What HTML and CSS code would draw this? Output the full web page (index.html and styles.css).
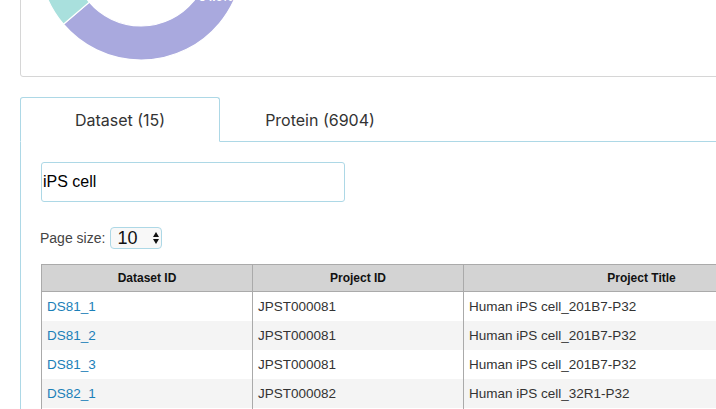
FILE: index.html
```html
<!DOCTYPE html>
<html>
<head>
<meta charset="utf-8">
<link rel="stylesheet" href="styles.css">
</head>
<body>
<div class="page">
  <div class="chart-card">
    <svg class="donut" width="240" height="136" viewBox="0 0 240 136">
      <path d="M 171 -71.3 A 102 102 0 1 1 42.44 83.24 L 68.29 61.16 A 68 68 0 1 0 154 -41.9 Z" fill="#a9a9de" stroke="#ffffff" stroke-width="1.2"/>
      <path d="M 42.44 83.24 A 102 102 0 0 1 69 -71.3 L 86 -41.9 A 68 68 0 0 0 68.29 61.16 Z" fill="#a9e0dd" stroke="#ffffff" stroke-width="1.2"/>
      <text x="178" y="59.5" class="donut-label">54.6%</text>
    </svg>
  </div>

  <div class="tabs">
    <ul class="tab-nav">
      <li class="tab active"><a>Dataset (15)</a></li>
      <li class="tab"><a>Protein (6904)</a></li>
    </ul>
    <div class="tab-pane">
      <input class="search" type="text" value="iPS cell">
      <div class="page-size">
        <span class="ps-label">Page size:</span>
        <span class="ps-select"><span class="ps-val">10</span><span class="ps-arrows"><span class="up"></span><span class="down"></span></span></span>
      </div>
      <table class="grid">
        <colgroup><col class="c1"><col class="c2"><col class="c3"></colgroup>
        <thead>
          <tr><th>Dataset ID</th><th>Project ID</th><th>Project Title</th></tr>
        </thead>
        <tbody>
          <tr><td><a>DS81_1</a></td><td>JPST000081</td><td>Human iPS cell_201B7-P32</td></tr>
          <tr><td><a>DS81_2</a></td><td>JPST000081</td><td>Human iPS cell_201B7-P32</td></tr>
          <tr><td><a>DS81_3</a></td><td>JPST000081</td><td>Human iPS cell_201B7-P32</td></tr>
          <tr><td><a>DS82_1</a></td><td>JPST000082</td><td>Human iPS cell_32R1-P32</td></tr>
          <tr><td><a>DS82_2</a></td><td>JPST000082</td><td>Human iPS cell_32R1-P32</td></tr>
        </tbody>
      </table>
    </div>
  </div>
</div>
</body>
</html>
```
FILE: styles.css
```css
html, body {
  margin: 0;
  padding: 0;
  overflow: hidden;
  background: #ffffff;
  height: 409px;
}
body {
  font-family: "Liberation Sans", Arial, sans-serif;
  color: #333;
}
.page {
  padding-left: 20px;
  width: 800px;
}
.chart-card {
  margin-top: -60px;
  height: 135px;
  border: 1px solid #d6d6d6;
  border-radius: 3px;
  box-sizing: content-box;
}
.donut {
  display: block;
}
.donut-label {
  fill: #ffffff;
  font-family: "Liberation Sans", Arial, sans-serif;
  font-size: 12px;
  font-weight: bold;
}
.tabs {
  margin-top: 20px;
}
.tab-nav {
  list-style: none;
  margin: 0;
  padding: 0;
  display: flex;
  border-bottom: 1px solid #add8e6;
}
.tab {
  margin-bottom: -1px;
}
.tab a {
  display: block;
  width: 198px;
  height: 43px;
  line-height: 44px;
  text-align: center;
  border: 1px solid transparent;
  border-radius: 3px 3px 0 0;
  font-family: Inter, "Open Sans", sans-serif;
  font-size: 16px;
  color: #333;
}
.tab.active a {
  border-color: #add8e6 #add8e6 #ffffff;
  background: #fff;
}
.tab-pane {
  border-left: 1px solid #add8e6;
  padding: 20px 0 0 20px;
  height: 300px;
}
.search {
  display: block;
  box-sizing: border-box;
  width: 304px;
  height: 40px;
  margin: 0;
  padding: 0 1px;
  border: 1px solid #add8e6;
  border-radius: 3px;
  font-family: "Liberation Sans", Arial, sans-serif;
  font-size: 16px;
  color: #000;
  outline: none;
}
.page-size {
  display: flex;
  align-items: center;
  margin-top: 25px;
  height: 22px;
}
.ps-label {
  font-size: 14px;
  color: #444;
  margin-right: 5px;
  margin-left: -1px;
}
.ps-select {
  box-sizing: border-box;
  display: flex;
  align-items: center;
  width: 52px;
  height: 22px;
  border: 1px solid #add8e6;
  border-radius: 4px;
  background: #f8f8f8;
  padding-left: 6px;
}
.ps-val {
  font-size: 18px;
  color: #111;
  width: 36px;
}
.ps-arrows {
  display: flex;
  flex-direction: column;
  gap: 2px;
}
.up {
  width: 0;
  height: 0;
  border-left: 3.5px solid transparent;
  border-right: 3.5px solid transparent;
  border-bottom: 5px solid #111;
}
.down {
  width: 0;
  height: 0;
  border-left: 3.5px solid transparent;
  border-right: 3.5px solid transparent;
  border-top: 5px solid #111;
}
.grid {
  margin-top: 15px;
  border-collapse: collapse;
  table-layout: fixed;
  width: 778px;
}
.c1, .c2 { width: 211px; }
.c3 { width: 356px; }
.grid th {
  background: #d3d3d3;
  border: 1px solid #aaa;
  height: 26px;
  padding: 0;
  font-size: 12px;
  font-weight: bold;
  color: #111;
  text-align: center;
}
.grid td {
  border-left: 1px solid #aaa;
  border-right: 1px solid #aaa;
  height: 29px;
  padding: 0 0 0 5px;
  font-size: 13.5px;
  color: #333;
}
.grid tbody tr:nth-child(even) td {
  background: #f4f4f4;
}
.grid td a {
  color: #1b80b8;
}
```
